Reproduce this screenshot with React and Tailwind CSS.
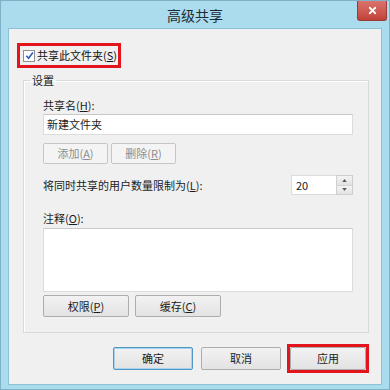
import { X } from "lucide-react";

const FONT = { fontFamily: '"Microsoft YaHei", "Noto Sans CJK SC", "Noto Sans", sans-serif' };

// Win8 style push button
function Button({ children, w, h = 22, disabled, isDefault }) {
  const border = disabled
    ? "border-[#c6c6c6] bg-[#f4f4f4] text-[#8d8d8d]"
    : isDefault
    ? "border-[#4f97c4] bg-gradient-to-b from-[#f2f2f2] to-[#e3e3e3] text-[#1b1b1b] shadow-[inset_0_0_0_1px_#a9d3ec]"
    : "border-[#adadad] bg-gradient-to-b from-[#f2f2f2] to-[#e3e3e3] text-[#1b1b1b]";
  return (
    <button
      className={`flex items-center justify-center whitespace-nowrap rounded-[2px] border text-[11px] leading-none ${border}`}
      style={{ width: w, height: h }}
    >
      {children}
    </button>
  );
}

function Label({ children, className = "" }) {
  return (
    <div className={`whitespace-nowrap text-[11px] leading-[16px] text-[#1b1b1b] ${className}`}>{children}</div>
  );
}

export default function App() {
  return (
    <div
      className="flex h-[390px] w-[390px] flex-col overflow-hidden border border-[#7fb2c9] bg-[#aadcee]"
      style={FONT}
    >
      {/* Title bar */}
      <div className="grid h-[27px] shrink-0 grid-cols-[1fr_auto_1fr]">
        <div />
        <div className="pt-[6px] text-[14px] leading-[16px] text-[#1e2a30]">高级共享</div>
        <div className="flex justify-end pr-[2px]">
          <div className="flex h-[20px] w-[30px] items-center justify-center rounded-b-[3px] border border-t-0 border-[#9b3a36] bg-gradient-to-b from-[#d9736c] to-[#c2423a]">
            <X className="h-[11px] w-[11px] text-white" strokeWidth={4} />
          </div>
        </div>
      </div>

      {/* Client area */}
      <div className="mx-[7px] mb-[4px] flex flex-1 flex-col border border-[#8ec0d6] bg-[#f0f0f0]">
        {/* Share checkbox, highlighted */}
        <div className="ml-[8px] mt-[14px] flex h-[25px] w-[104px] items-center gap-[2px] whitespace-nowrap border-[3px] border-[#e3141c] pl-[3px]">
          <div className="flex h-[12px] w-[12px] shrink-0 items-center justify-center border border-[#8f8f8f] bg-white">
            <svg viewBox="0 0 10 10" className="h-[9px] w-[9px]">
              <path d="M1.5 5.2 L4 8 L8.8 1.6" fill="none" stroke="#2a5cb8" strokeWidth="1.8" />
            </svg>
          </div>
          <span className="text-[11px] leading-none text-[#111]">
            共享此文件夹(<span className="underline">S</span>)
          </span>
        </div>

        {/* Settings group */}
        <fieldset className="ml-[14px] mt-[4px] w-[346px] border border-[#d9d9d9] pb-[15px] pl-[19px] shadow-[inset_1px_1px_0_#fff]">
          <legend className="ml-[-13px] px-[2px] text-[11px] leading-[16px] text-[#1b1b1b]">设置</legend>

          <Label className="mt-[9px]">
            共享名(<span className="underline">H</span>):
          </Label>
          <div className="mt-[1px] flex h-[21px] w-[310px] items-center border border-[#dcdcdc] border-t-[#c8c8c8] bg-white pl-[3px] text-[11px] text-[#1b1b1b]">
            新建文件夹
          </div>

          <div className="mt-[8px] flex gap-[3px]">
            <Button w={65} h={21} disabled>
              添加(<span className="underline">A</span>)
            </Button>
            <Button w={65} h={21} disabled>
              删除(<span className="underline">R</span>)
            </Button>
          </div>

          <div className="mt-[11px] flex h-[20px] w-[310px] items-center justify-between">
            <Label>
              将同时共享的用户数量限制为(<span className="underline">L</span>):
            </Label>
            <div className="flex h-[20px]">
              <div className="flex w-[45px] items-center border border-r-0 border-[#dcdcdc] bg-white pl-[4px] text-[11px] text-[#1b1b1b]">
                20
              </div>
              <div className="flex w-[17px] flex-col border border-[#cfcfcf] bg-[#e9e9e9]">
                <div className="flex flex-1 items-center justify-center border-b border-[#d4d4d4] bg-gradient-to-b from-[#f4f4f4] to-[#e2e2e2]">
                  <svg viewBox="0 0 6 4" className="h-[3px] w-[5px]">
                    <path d="M0 4 L3 0 L6 4 Z" fill="#5a5a5a" />
                  </svg>
                </div>
                <div className="flex flex-1 items-center justify-center bg-gradient-to-b from-[#f4f4f4] to-[#e2e2e2]">
                  <svg viewBox="0 0 6 4" className="h-[3px] w-[5px]">
                    <path d="M0 0 L3 4 L6 0 Z" fill="#5a5a5a" />
                  </svg>
                </div>
              </div>
            </div>
          </div>

          <Label className="mt-[15px]">
            注释(<span className="underline">O</span>):
          </Label>
          <div className="mt-[2px] h-[64px] w-[310px] border border-[#dcdcdc] border-t-[#c8c8c8] bg-white" />

          <div className="mt-[3px] flex gap-[6px]">
            <Button w={86}>
              权限(<span className="underline">P</span>)
            </Button>
            <Button w={86}>
              缓存(<span className="underline">C</span>)
            </Button>
          </div>
        </fieldset>

        {/* Dialog buttons */}
        <div className="mt-[11px] flex items-center justify-end pr-[12px]">
          <Button w={80} h={23} isDefault>
            确定
          </Button>
          <div className="ml-[8px]">
            <Button w={80} h={23}>
              取消
            </Button>
          </div>
          <div className="ml-[6px] flex h-[29px] w-[82px] items-center justify-center border-[3px] border-[#e3141c] bg-[#e9e9e9]">
            <Button w={76} h={23}>
              应用
            </Button>
          </div>
        </div>
      </div>
    </div>
  );
}
